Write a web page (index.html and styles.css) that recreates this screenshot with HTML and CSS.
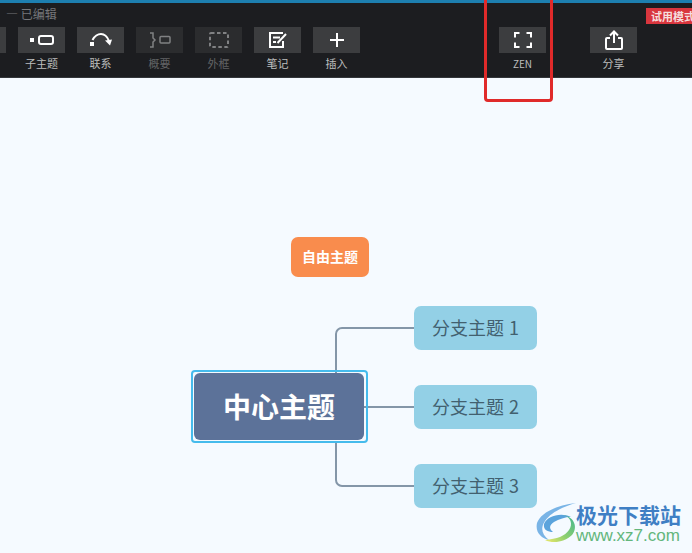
FILE: index.html
```html
<!DOCTYPE html>
<html lang="zh-CN">
<head>
  <meta charset="UTF-8" />
  <meta name="viewport" content="width=device-width, initial-scale=1.0" />
  <title>思维导图</title>
  <link rel="stylesheet" href="styles.css">
</head>
<body>
  <header class="topbar">
    <div class="doc-title">— 已编辑</div>
    <div class="tools">
      <div class="tool tool-cut"><span class="tool-btn"></span></div>
      <div class="tool">
        <span class="tool-btn">
          <svg width="24" height="12" viewBox="0 0 24 12"><rect x="0" y="4" width="4" height="4" fill="#fff"/><rect x="9" y="2" width="14" height="8" rx="2" fill="none" stroke="#fff" stroke-width="2"/></svg>
        </span>
        <span class="tool-label">子主题</span>
      </div>
      <div class="tool">
        <span class="tool-btn">
          <svg width="24" height="16" viewBox="0 0 24 16"><rect x="1" y="10" width="4" height="4" fill="#fff"/><path d="M3.500 8C6 3.500 9 2 12 2s6 2 8 7" fill="none" stroke="#fff" stroke-width="2"/><path d="M16 8.500l5 5 2-6z" fill="#fff"/></svg>
        </span>
        <span class="tool-label">联系</span>
      </div>
      <div class="tool tool-off">
        <span class="tool-btn">
          <svg width="22" height="16" viewBox="0 0 22 16"><path d="M1 1h3v5l2 2-2 2v5H1" fill="none" stroke="#808183" stroke-width="1.500"/><rect x="11" y="4.500" width="10" height="6.500" rx="1" fill="none" stroke="#808183" stroke-width="1.500"/></svg>
        </span>
        <span class="tool-label">概要</span>
      </div>
      <div class="tool tool-off">
        <span class="tool-btn">
          <svg width="22" height="18" viewBox="0 0 22 18"><rect x="2" y="2" width="18" height="14" rx="1" fill="none" stroke="#808183" stroke-width="2" stroke-dasharray="3.500 2.500"/></svg>
        </span>
        <span class="tool-label">外框</span>
      </div>
      <div class="tool">
        <span class="tool-btn">
          <svg width="20" height="18" viewBox="0 0 20 18"><path d="M15 2H2v14h13v-6" fill="none" stroke="#fff" stroke-width="2"/><path d="M5 6.500h7M5 11h3" stroke="#fff" stroke-width="1.800"/><path d="M9.500 12L18 3" stroke="#fff" stroke-width="2"/></svg>
        </span>
        <span class="tool-label">笔记</span>
      </div>
      <div class="tool">
        <span class="tool-btn">
          <svg width="16" height="16" viewBox="0 0 16 16"><path d="M8 1v14M1 8h14" stroke="#fff" stroke-width="2"/></svg>
        </span>
        <span class="tool-label">插入</span>
      </div>
      <div class="tool tool-zen">
        <span class="tool-btn">
          <svg width="18" height="16" viewBox="0 0 18 16"><path d="M5.500 1H1v4.500M12.500 1H17v4.500M5.500 15H1v-4.500M12.500 15H17v-4.500" fill="none" stroke="#fff" stroke-width="2"/></svg>
        </span>
        <span class="tool-label">ZEN</span>
      </div>
      <div class="tool tool-share">
        <span class="tool-btn">
          <svg width="18" height="20" viewBox="0 0 18 20"><path d="M5 8H2a1 1 0 0 0-1 1v9a1 1 0 0 0 1 1h14a1 1 0 0 0 1-1V9a1 1 0 0 0-1-1h-3" fill="none" stroke="#fff" stroke-width="2"/><path d="M9 13V2M5 5.500L9 1.500l4 4" fill="none" stroke="#fff" stroke-width="2"/></svg>
        </span>
        <span class="tool-label">分享</span>
      </div>
    </div>
    <div class="trial-badge">试用模式</div>
  </header>

  <main class="canvas">
    <svg class="links" width="692" height="476" viewBox="0 0 692 476">
      <path d="M336 295V256a6 6 0 0 1 6-6H414" />
      <path d="M364 329H414" />
      <path d="M336 363V402a6 6 0 0 0 6 6H414" />
    </svg>
    <div class="node node-free">自由主题</div>
    <div class="node-focus"><div class="node node-center">中心主题</div></div>
    <div class="node node-branch branch-1">分支主题 1</div>
    <div class="node node-branch branch-2">分支主题 2</div>
    <div class="node node-branch branch-3">分支主题 3</div>

    <div class="watermark">
      <svg class="watermark-logo" width="46" height="42" viewBox="0 0 46 42">
        <defs>
          <linearGradient id="swirl" x1="0.900" y1="0.100" x2="0.100" y2="0.900">
            <stop offset="0" stop-color="#4fb98a"/>
            <stop offset="0.600" stop-color="#8fd06f"/>
            <stop offset="1" stop-color="#dbe36a"/>
          </linearGradient>
        </defs>
        <path d="M43 1C25 3 8 10 4 21c-2 9 4 15 12 17-7-5-9-12-4-19C18 10 32 4 43 1z" fill="#79b4e6"/>
        <path d="M38 15c-10-5-24-1-27 7-1 6 4 8 9 8-4-3-4-7 1-10 5-3 11-5 17-5z" fill="#5aa3dc"/>
        <path d="M30 13c8 2 10 9 6 15-4 6-12 9-24 10 8 4 20 2 27-5 6-7 3-18-9-20z" fill="url(#swirl)"/>
      </svg>
      <div class="watermark-text">
        <div class="watermark-name">极光下载站</div>
        <div class="watermark-url">www.xz7.com</div>
      </div>
    </div>
  </main>

  <div class="zen-mark"></div>
</body>
</html>
```

FILE: styles.css
```css
* {
  box-sizing: border-box;
}
html, body {
  height: 100%;
}
body {
  margin: 0;
  position: relative;
  overflow: hidden;
  font-family: "Noto Sans CJK SC", "Liberation Sans", sans-serif;
  background-color: #f5faff;
}

/* top toolbar */
.topbar {
  position: relative;
  height: 78px;
  background-color: #1c1d20;
  border-top: 3px solid #1d7fb0;
  border-bottom: 1px solid #33363a;
  overflow: hidden;
}
.doc-title {
  height: 24px;
  padding: 2px 0 0 6px;
  font-size: 12px;
  line-height: 18px;
  color: #76777a;
}
.tools {
  display: flex;
  gap: 12px;
  margin-left: -41px;
}
.tool {
  display: flex;
  flex-direction: column;
  align-items: center;
  width: 47px;
  flex: none;
}
.tool-btn {
  display: flex;
  align-items: center;
  justify-content: center;
  width: 47px;
  height: 26px;
  background-color: #3c3d3f;
}
.tool-label {
  margin-top: 3px;
  font-size: 11px;
  line-height: 15px;
  white-space: nowrap;
  color: #bdbdbd;
}
.tool-off .tool-btn {
  background-color: #2b2c2e;
}
.tool-off .tool-label {
  color: #626365;
}
.tool-zen {
  margin-left: 127px;
}
.tool-zen .tool-label {
  font-size: 10px;
}
.tool-share {
  margin-left: 32px;
}
.trial-badge {
  position: absolute;
  left: 646px;
  top: 5px;
  width: 60px;
  height: 16px;
  padding-left: 5px;
  font-size: 11px;
  font-weight: 700;
  line-height: 16px;
  white-space: nowrap;
  color: #f6dede;
  background-color: #d9363e;
}

/* mind map, nodes sit on a free canvas */
.canvas {
  position: relative;
  height: 475px;
  overflow: hidden;
}
.links {
  position: absolute;
  left: 0;
  top: 0;
}
.links path {
  fill: none;
  stroke: #8496a8;
  stroke-width: 2;
}
.node {
  position: absolute;
  display: flex;
  align-items: center;
  justify-content: center;
  padding-bottom: 2px;
  white-space: nowrap;
}
.node-free {
  left: 291px;
  top: 159px;
  width: 78px;
  height: 40px;
  border-radius: 7px;
  font-size: 14px;
  font-weight: 700;
  color: #fff;
  background-color: #f98c4d;
}
.node-focus {
  position: absolute;
  left: 191px;
  top: 292px;
  width: 177px;
  height: 73px;
  border: 2px solid #45bbec;
  border-radius: 4px;
}
.node-center {
  left: 1px;
  top: 1px;
  width: 170px;
  height: 67px;
  border-radius: 6px;
  font-size: 28px;
  font-weight: 700;
  color: #fff;
  background-color: #5c7299;
}
.node-branch {
  left: 414px;
  width: 123px;
  height: 44px;
  border-radius: 7px;
  font-size: 18px;
  word-spacing: 1px;
  color: #42606f;
  background-color: #93d0e6;
}
.branch-1 {
  top: 228px;
}
.branch-2 {
  top: 307px;
}
.branch-3 {
  top: 386px;
}

/* site watermark, bottom right */
.watermark {
  position: absolute;
  left: 533px;
  top: 423px;
  display: flex;
  align-items: center;
}
.watermark-logo {
  flex: none;
}
.watermark-text {
  margin-left: -3px;
}
.watermark-name {
  font-size: 21px;
  font-weight: 700;
  line-height: 26px;
  white-space: nowrap;
  color: #3f7fc4;
}
.watermark-url {
  font-family: "Liberation Sans", sans-serif;
  font-size: 17px;
  line-height: 18px;
  white-space: nowrap;
  color: #63b67c;
}

/* red highlight around the ZEN button */
.zen-mark {
  position: absolute;
  left: 484px;
  top: -6px;
  width: 69px;
  height: 108px;
  border: 3px solid #e02a2a;
  border-radius: 4px;
}
```
